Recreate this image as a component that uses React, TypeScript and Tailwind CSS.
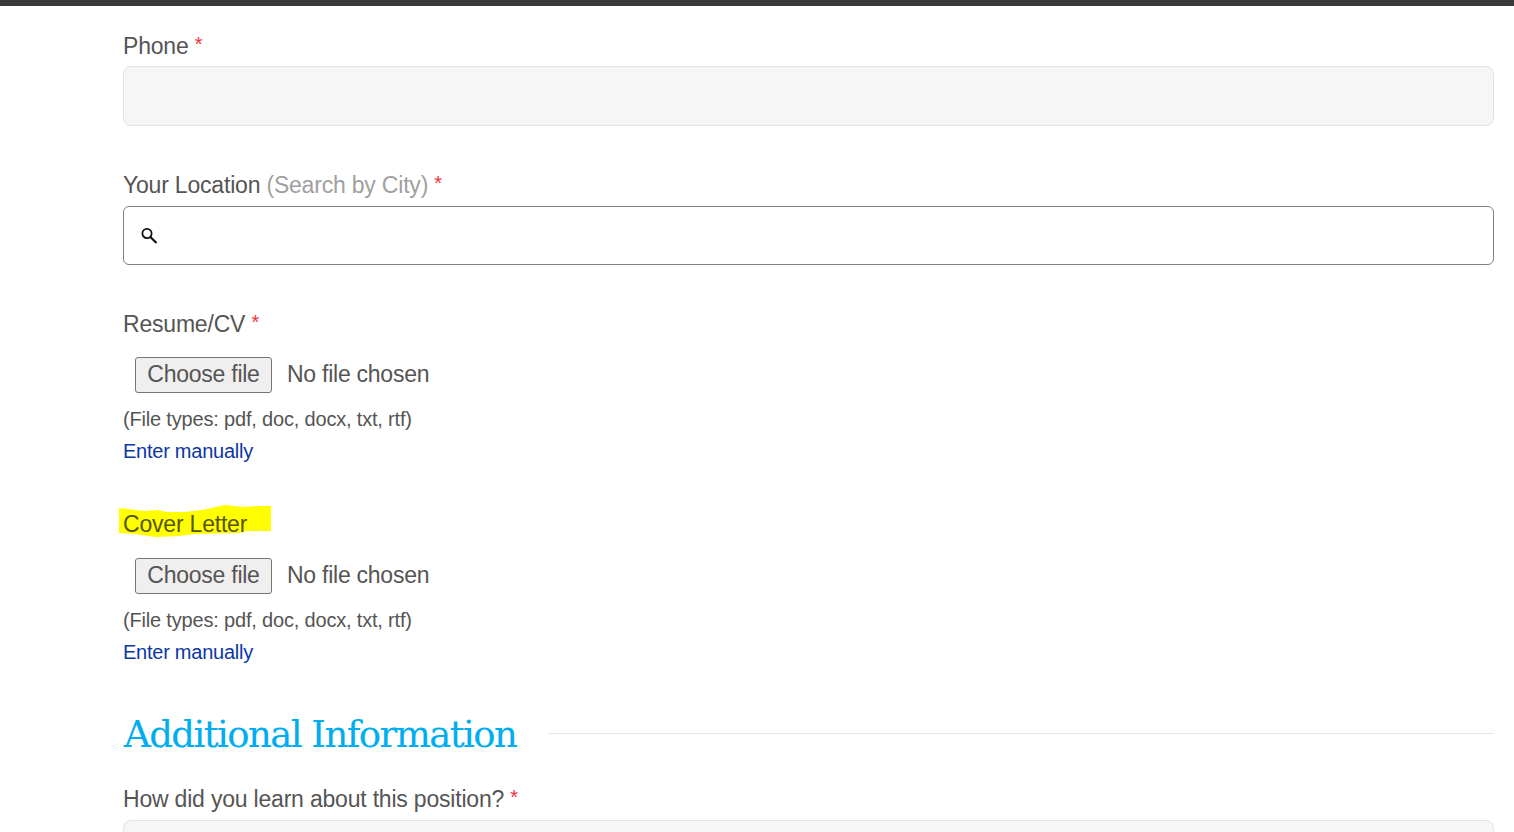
import React from 'react';

const sans = '[font-family:"Liberation_Sans",Arial,sans-serif]';

const Req = () => <span className="text-[#f0323c] text-[20px] align-[3px]"> *</span>;

const FileField = () => (
  <>
    <div className="flex items-center h-[36px] pl-[12px]">
      <button className="h-[36px] w-[137px] pb-[2px] rounded-[3px] border border-[#767676] bg-[#efefef] text-[#555] text-[23px] tracking-[-0.25px] leading-none">
        Choose file
      </button>
      <span className="ml-[15px] pb-[2px] text-[#555] text-[23px] tracking-[-0.25px]">No file chosen</span>
    </div>
    <p className="mt-[14px] h-[24px] text-[20px] tracking-[-0.18px] leading-[24px] text-[#555]">(File types: pdf, doc, docx, txt, rtf)</p>
    <a className="block mt-[8px] h-[24px] text-[20px] tracking-[-0.25px] leading-[24px] text-[#0b36a8]">Enter manually</a>
  </>
);

export default function App() {
  return (
    <div className={`h-[832px] overflow-hidden bg-white ${sans}`}>
      <div className="h-[6px] bg-[#3a3a3a]" />
      <form className="pl-[123px] pr-[20px]">
        <label className="block mt-[24px] h-[28px] text-[23px] tracking-[-0.2px] leading-[28px] text-[#555]">
          Phone <Req />
        </label>
        <div className="mt-[8px] h-[60px] rounded-[8px] border border-[#e2e2e2] bg-[#f6f6f6]" />

        <label className="block mt-[43px] h-[28px] text-[23px] tracking-[-0.2px] leading-[28px] text-[#555]">
          Your Location <span className="text-[#a0a0a0]">(Search by City)</span> <Req />
        </label>
        <div className="mt-[9px] h-[59px] rounded-[6px] border border-[#808080] bg-white flex items-center pl-[16px]">
          <svg width="18" height="18" viewBox="0 0 18 18" fill="none" stroke="#111" strokeWidth="1.8">
            <circle cx="7" cy="6.5" r="4.6" />
            <path d="M10.4 10 16.5 16" strokeWidth="2.2" />
          </svg>
        </div>

        <label className="block mt-[43px] h-[28px] text-[23px] tracking-[-0.2px] leading-[28px] text-[#555]">
          Resume/CV <Req />
        </label>
        <div className="mt-[21px]">
          <FileField />
        </div>

        <label className="relative block mt-[47px] h-[28px] text-[23px] tracking-[-0.2px] leading-[28px] text-[#555500]">
          <svg className="absolute left-[-4px] top-[-5px]" width="153" height="33" viewBox="0 0 153 33" fill="#ffff00">
            <path d="M0 3 26 6 38 5 48 7 66 7 83 5 106 0 126 2 136 1 152 1 152 26 136 26 128 26 120 28 76 29 60 31 36 32 16 29 0 28Z" />
          </svg>
          <span className="relative">Cover Letter</span>
        </label>
        <div className="mt-[20px]">
          <FileField />
        </div>

        <div className="mt-[43px] flex items-center h-[56px]">
          <h2 className="ml-px text-[37px] leading-[56px] text-[#00aeef] [font-family:'DejaVu_Serif',serif] [-webkit-text-stroke:0.15px_#00aeef] tracking-[-1.55px] w-[424px] whitespace-nowrap">
            Additional Information
          </h2>
          <div className="h-px flex-1 bg-[#e6e6e6] -mt-[4px]" />
        </div>

        <label className="block mt-[20px] h-[28px] text-[23px] tracking-[-0.2px] leading-[28px] text-[#555]">
          How did you learn about this position? <Req />
        </label>
        <div className="mt-[9px] h-[60px] rounded-[8px] border border-[#e2e2e2] bg-[#f6f6f6]" />
      </form>
    </div>
  );
}
